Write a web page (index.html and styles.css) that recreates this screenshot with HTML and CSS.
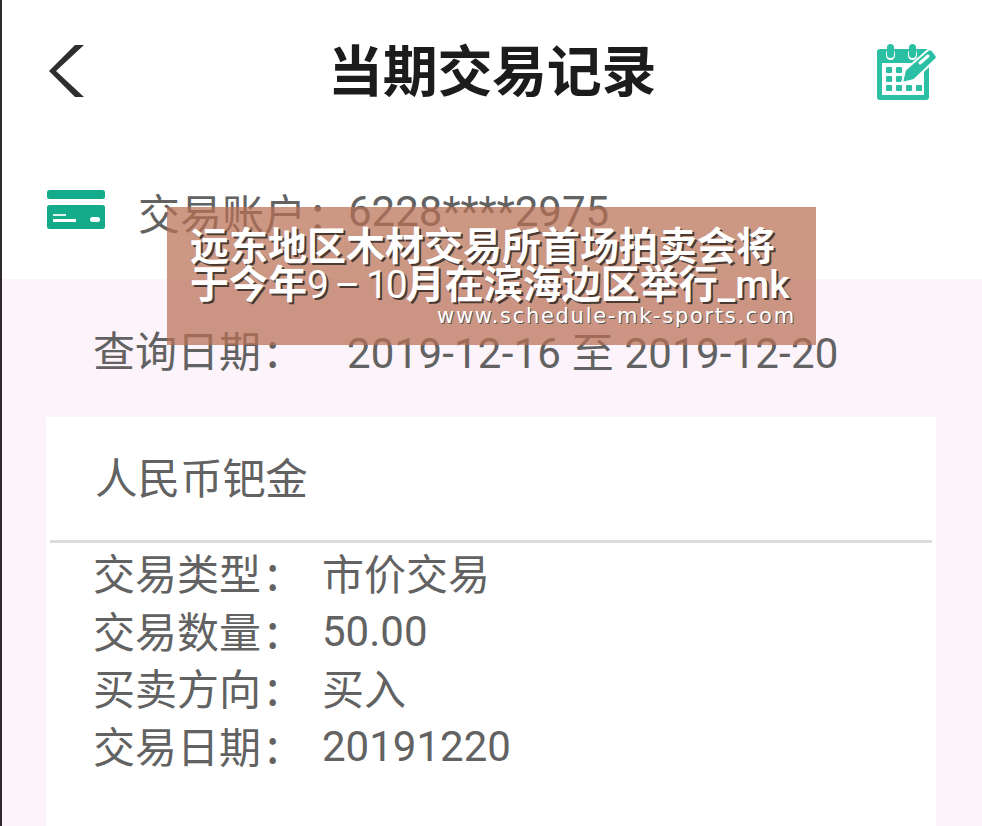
FILE: index.html
```html
<!DOCTYPE html>
<html lang="zh-CN">
<head>
<meta charset="utf-8">
<title>当期交易记录</title>
<link rel="stylesheet" href="styles.css">
</head>
<body>
<div class="page">
  <div class="top">
    <header class="header">
      <svg class="back" width="40" height="56" viewBox="0 0 40 56"><polygon points="27,1 36,1 8,27 36,53 27,53 1,27" fill="#2f2f2f"/></svg>
      <h1 class="title">当期交易记录</h1>
      <svg class="cal" width="62" height="58" viewBox="0 0 62 58">
        <path d="M4 6h46a3 3 0 0 1 3 3v45a3 3 0 0 1-3 3H4a3 3 0 0 1-3-3V9a3 3 0 0 1 3-3z" fill="#2bbfa4"/>
        <rect x="6" y="20" width="42" height="32" fill="#fff"/>
        <rect x="10" y="6" width="9" height="11" rx="4.5" fill="#fff"/>
        <rect x="32" y="6" width="9" height="11" rx="4.5" fill="#fff"/>
        <rect x="11" y="1" width="7" height="14" rx="3.5" fill="#2bbfa4"/>
        <rect x="33" y="1" width="7" height="14" rx="3.5" fill="#2bbfa4"/>
        <g fill="#2bbfa4">
          <rect x="10" y="24" width="6" height="6" rx="1"/><rect x="20" y="24" width="6" height="6" rx="1"/>
          <rect x="10" y="33" width="6" height="6" rx="1"/><rect x="20" y="33" width="6" height="6" rx="1"/>
          <rect x="10" y="42" width="6" height="6" rx="1"/><rect x="20" y="42" width="6" height="6" rx="1"/><rect x="30" y="42" width="6" height="6" rx="1"/><rect x="40" y="42" width="6" height="6" rx="1"/>
        </g>
        <path d="M26 40l3-13 23-20a3 3 0 0 1 4 0l4 5a3 3 0 0 1 0 4L38 37z" fill="#2bbfa4" stroke="#fff" stroke-width="2"/>
        <path d="M44 20l8-7" stroke="#fff" stroke-width="3" stroke-linecap="round"/>
      </svg>
    </header>
    <div class="account">
      <svg class="cardicon" width="58" height="39" viewBox="0 0 58 39">
        <rect x="0" y="0" width="58" height="9" rx="2.5" fill="#14ab8a"/>
        <rect x="0" y="15" width="58" height="24" rx="2.5" fill="#14ab8a"/>
        <rect x="6" y="24" width="13" height="2" fill="#fff" opacity=".85"/>
        <rect x="6" y="29" width="23" height="3" fill="#fff"/>
        <rect x="43" y="27" width="10" height="5" rx="2.5" fill="#fff"/>
      </svg>
      <span class="acct-label">交易账户<span class="colon">:</span></span>
      <span class="acct-value">6228****2975</span>
    </div>
  </div>
  <main class="body">
    <div class="query">
      <span class="query-label">查询日期<span class="colon">:</span></span>
      <span class="query-value">2019-12-16 至 2019-12-20</span>
    </div>
    <section class="card">
      <div class="card-title">人民币钯金</div>
      <div class="divider"></div>
      <dl class="rows">
        <dt>交易类型<span class="colon">:</span></dt><dd>市价交易</dd>
        <dt>交易数量<span class="colon">:</span></dt><dd class="num">50.00</dd>
        <dt>买卖方向<span class="colon">:</span></dt><dd>买入</dd>
        <dt>交易日期<span class="colon">:</span></dt><dd class="num">20191220</dd>
      </dl>
    </section>
  </main>
  <aside class="banner">
    <div class="headline">
      <div>远东地区木材交易所首场拍卖会将</div>
      <div>于今年<span class="thin">9 – 10</span>月在滨海边区举行<span class="latin">_mk</span></div>
    </div>
    <div class="url">www.schedule-mk-sports.com</div>
  </aside>
</div>
</body>
</html>
```
FILE: styles.css
```css
* { box-sizing: border-box; margin: 0; padding: 0; }
html, body { width: 982px; height: 826px; overflow: hidden; background: #fff; }
body { font-family: Roboto, "Noto Sans CJK SC", sans-serif; color: #626262; font-size: 42px; }
.page { position: relative; width: 982px; height: 826px; display: flex; flex-direction: column; overflow: hidden; border-left: 2px solid #2e2a2e; }
.top { height: 279px; flex: none; background: #fff; }
.header { height: 142px; display: flex; align-items: center; padding: 2px 44px 0 46px; }
.title { font-size: 55px; font-weight: 700; color: #1c1c1c; line-height: 60px; margin: 0 auto 0 240px; letter-spacing: -.3px; }
.back { display: block; }
.account { display: flex; align-items: center; height: 137px; padding: 0 0 2px 45px; }
.cardicon { display: block; margin-right: 34px; }
.acct-label, .acct-value { position: relative; top: 2px; }
.acct-label { width: 210px; display: block; margin-left: -1px; }
.colon { margin-left: 5px; font-family: "Noto Sans CJK SC", sans-serif; font-size: 48px; line-height: 1; }
.body { flex: 1; background: #fdf3fb; padding: 0 46px 0 44px; }
.query { display: flex; align-items: center; height: 138px; padding: 0 0 0 47px; }
.query-label { width: 254px; display: block; }
.query-value { letter-spacing: .2px; padding-top: 3px; }
.card { background: #fff; height: 420px; }
.card-title { height: 123px; display: flex; align-items: center; padding: 0 0 6px 49px; font-size: 42.6px; }
.divider { height: 3px; background: #ddd; margin: 0 4px; }
.rows { display: grid; grid-template-columns: 229px 1fr; grid-auto-rows: 57.5px; padding: 0 0 0 47px; align-items: center; }
.num { padding-top: 4px; }
.banner { position: absolute; left: 165px; top: 207px; width: 649px; height: 138px; background: rgba(184, 112, 84, .72); color: #fff; }
.headline { padding: 21px 0 0 23px; font-size: 39px; font-weight: 700; line-height: 38px; white-space: nowrap; text-shadow: 2px 2px 0 #4a3a32; }
.thin { font-weight: 400; letter-spacing: -2px; }
.latin { font-weight: 500; }
.url { position: absolute; left: 270px; top: 95px; font-family: "DejaVu Sans", sans-serif; font-size: 21px; line-height: 28px; letter-spacing: 1.7px; white-space: nowrap; text-shadow: 1px 1px 0 #555; }
```
